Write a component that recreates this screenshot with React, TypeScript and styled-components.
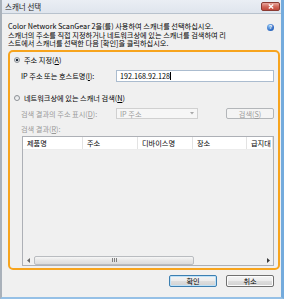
import React from "react";
import styled, { createGlobalStyle } from "styled-components";

const GlobalStyle = createGlobalStyle`
  html, body { margin: 0; padding: 0; background: #ffffff; }
  body {
    font-family: "Noto Sans CJK KR", "Noto Sans", sans-serif;
    font-size: 7.2px;
    color: #000;
  }
  * { box-sizing: border-box; }
`;

const Window = styled.div`
  width: 284px;
  height: 299px;
  display: flex;
  flex-direction: column;
  background: #f0f0f0;
  border-left: 2px solid #a9b1ba;
  border-right: 3px solid #74abdd;
  border-bottom: 2px solid #95c0e6;
`;

const TitleBar = styled.div`
  height: 14px;
  flex: none;
  display: flex;
  align-items: center;
  justify-content: space-between;
  padding-left: 3px;
  background: linear-gradient(#eaeef4, #dfe5ed);
  border-bottom: 1px solid #b8c2cd;
`;

const Title = styled.span`
  font-size: 7.5px;
  line-height: 13px;
  color: #1b1b1b;
`;

const CloseButton = styled.div`
  width: 19px;
  height: 9px;
  margin-right: 1px;
  margin-bottom: 1px;
  border: 1px solid #8b3b33;
  border-radius: 2px;
  background: linear-gradient(#e9a69d, #cf6457 55%, #c0493c);
  display: flex;
  align-items: center;
  justify-content: center;
`;

const Main = styled.div`
  flex: 1;
  display: flex;
  flex-direction: column;
  padding: 8px 0 0 6px;
`;

const Intro = styled.div`
  display: flex;
  justify-content: space-between;
  align-items: flex-start;
  padding-right: 7px;
`;

const IntroText = styled.div`
  line-height: 8.5px;
  white-space: nowrap;
`;

const HelpIcon = styled.div`
  width: 7px;
  height: 7px;
  margin-top: 2px;
  border-radius: 50%;
  background: radial-gradient(circle at 35% 30%, #8fc0f2, #2766c0 70%, #1a4f9c);
  color: #fff;
  font-size: 5px;
  font-weight: bold;
  line-height: 7px;
  text-align: center;
  font-family: "Liberation Sans", sans-serif;
`;

const GroupBox = styled.div`
  margin-top: 2.5px;
  margin-right: 1px;
  border: 2px solid #f7a41d;
  border-radius: 5px;
  padding: 2px 4px 2px 4px;
  display: flex;
  flex-direction: column;
`;

const RadioRow = styled.div<{ $top?: number }>`
  height: 12px;
  margin-top: ${(p) => p.$top ?? 0}px;
  display: flex;
  align-items: center;
  gap: 4px;
  white-space: nowrap;
`;

const RadioCircle = styled.div<{ $checked?: boolean }>`
  width: 6px;
  height: 6px;
  border-radius: 50%;
  border: 1px solid #8d9196;
  background: ${(p) =>
    p.$checked
      ? "radial-gradient(circle, #1d2a38 0 1.3px, #dfe3e8 1.6px)"
      : "linear-gradient(#e2e4e6, #f8f8f8)"};
`;

const FieldRow = styled.div<{ $top: number; $h: number }>`
  height: ${(p) => p.$h}px;
  margin-top: ${(p) => p.$top}px;
  padding-left: 7px;
  display: flex;
  align-items: center;
  white-space: nowrap;
`;

const FieldLabel = styled.span<{ $disabled?: boolean }>`
  width: 95px;
  flex: none;
  color: ${(p) => (p.$disabled ? "#9a9a9a" : "#000")};
`;

const TextBox = styled.div`
  width: 158px;
  height: 12px;
  border: 1px solid #abbccf;
  background: #fff;
  padding-left: 3px;
  display: flex;
  align-items: center;
`;

const Caret = styled.span`
  display: inline-block;
  width: 1px;
  height: 8px;
  background: #000;
  margin-left: 0.5px;
`;

const SelectBox = styled.div`
  width: 82px;
  height: 11px;
  border: 1px solid #d0d0d0;
  background: #f6f6f6;
  color: #9a9a9a;
  padding: 0 3px;
  display: flex;
  align-items: center;
  justify-content: space-between;
`;

const SmallButton = styled.div`
  width: 48px;
  height: 11px;
  margin-left: auto;
  border: 1px solid #b3b6b9;
  border-radius: 2px;
  background: #f4f4f4;
  color: #9a9a9a;
  display: flex;
  align-items: center;
  justify-content: center;
`;

const SubLabel = styled.div`
  height: 10px;
  margin-top: 5px;
  padding-left: 7px;
  color: #9a9a9a;
  display: flex;
  align-items: center;
`;

const ListBox = styled.div`
  height: 130px;
  margin-top: 2px;
  margin-left: 8px;
  border: 1px solid #adb0b6;
  display: flex;
  flex-direction: column;
  overflow: hidden;
`;

const HeaderRow = styled.div`
  height: 13px;
  flex: none;
  display: flex;
  background: #fff;
  border-bottom: 1px solid #ececec;
`;

const HeaderCell = styled.div<{ $w?: number }>`
  width: ${(p) => (p.$w ? `${p.$w}px` : "auto")};
  flex: ${(p) => (p.$w ? "none" : "1")};
  padding-left: 4px;
  display: flex;
  align-items: center;
  border-right: 1px solid #e3e3e3;
  white-space: nowrap;
  overflow: hidden;
`;

const ListBody = styled.div`
  flex: 1;
  background: #f0f0f0;
`;

const HScroll = styled.div`
  height: 10px;
  flex: none;
  display: flex;
  align-items: center;
  background: #f0f0f0;
`;

const ArrowCell = styled.div<{ $right?: boolean }>`
  width: 10px;
  height: 10px;
  display: flex;
  align-items: center;
  justify-content: center;
  margin-left: ${(p) => (p.$right ? "auto" : "0")};
`;

const Thumb = styled.div`
  width: 160px;
  height: 9px;
  margin-left: 1px;
  border: 1px solid #b9bcc0;
  border-radius: 2px;
  background: linear-gradient(#f6f6f6, #e6e6e6 50%, #dcdcdc);
  display: flex;
  align-items: center;
  justify-content: center;
`;

const ButtonRow = styled.div`
  margin-top: 5px;
  display: flex;
  justify-content: flex-end;
  gap: 9px;
  padding-right: 7px;
`;

const DialogButton = styled.div<{ $default?: boolean }>`
  width: 48px;
  height: 12px;
  border: 1px solid ${(p) => (p.$default ? "#3c7fb1" : "#707070")};
  border-radius: 2px;
  background: linear-gradient(#f4f4f4, #ececec 50%, #dedede 51%, #d2d2d2);
  box-shadow: ${(p) => (p.$default ? "inset 0 0 0 1px #bfe2f8" : "inset 0 0 0 1px #fcfcfc")};
  display: flex;
  align-items: center;
  justify-content: center;
`;

const Mn = styled.span`
  text-decoration: underline;
  text-underline-offset: 0.5px;
`;

const Grip = () => (
  <svg width="5" height="4" viewBox="0 0 5 4">
    <path d="M0.5 0v4M2.5 0v4M4.5 0v4" stroke="#7f7f7f" strokeWidth="1" />
  </svg>
);

export default function App() {
  return (
    <>
      <GlobalStyle />
      <Window>
        <TitleBar>
          <Title>스캐너 선택</Title>
          <CloseButton>
            <svg width="6" height="5" viewBox="0 0 6 5">
              <path d="M0.8 0.5L5.2 4.5M5.2 0.5L0.8 4.5" stroke="#ffffff" strokeWidth="1.3" />
            </svg>
          </CloseButton>
        </TitleBar>
        <Main>
          <Intro>
            <IntroText>
              Color Network ScanGear 2을(를) 사용하여 스캐너를 선택하십시오.
              <br />
              스캐너의 주소를 직접 지정하거나 네트워크상에 있는 스캐너를 검색하여 리
              <br />
              스트에서 스캐너를 선택한 다음 [확인]을 클릭하십시오.
            </IntroText>
            <HelpIcon>?</HelpIcon>
          </Intro>
          <GroupBox>
            <RadioRow>
              <RadioCircle $checked />
              <span>
                주소 지정(<Mn>A</Mn>)
              </span>
            </RadioRow>
            <FieldRow $top={4} $h={12}>
              <FieldLabel>
                IP 주소 또는 호스트명(<Mn>I</Mn>):
              </FieldLabel>
              <TextBox>
                192.168.92.128
                <Caret />
              </TextBox>
            </FieldRow>
            <RadioRow $top={10}>
              <RadioCircle />
              <span>
                네트워크상에 있는 스캐너 검색(<Mn>N</Mn>)
              </span>
            </RadioRow>
            <FieldRow $top={4} $h={11}>
              <FieldLabel $disabled>
                검색 결과의 주소 표시(<Mn>D</Mn>):
              </FieldLabel>
              <SelectBox>
                <span>IP 주소</span>
                <svg width="4" height="3" viewBox="0 0 4 3">
                  <path d="M0 0h4L2 2.5z" fill="#a8a8a8" />
                </svg>
              </SelectBox>
              <SmallButton>
                검색(<Mn>S</Mn>)
              </SmallButton>
            </FieldRow>
            <SubLabel>
              검색 결과(<Mn>R</Mn>):
            </SubLabel>
            <ListBox>
              <HeaderRow>
                <HeaderCell $w={60}>제품명</HeaderCell>
                <HeaderCell $w={55}>주소</HeaderCell>
                <HeaderCell $w={55}>디바이스명</HeaderCell>
                <HeaderCell $w={54}>장소</HeaderCell>
                <HeaderCell>급지대</HeaderCell>
              </HeaderRow>
              <ListBody />
              <HScroll>
                <ArrowCell>
                  <svg width="3" height="5" viewBox="0 0 3 5">
                    <path d="M3 0v5L0 2.5z" fill="#6a6a6a" />
                  </svg>
                </ArrowCell>
                <Thumb>
                  <Grip />
                </Thumb>
                <ArrowCell $right>
                  <svg width="3" height="5" viewBox="0 0 3 5">
                    <path d="M0 0v5L3 2.5z" fill="#3a3a3a" />
                  </svg>
                </ArrowCell>
              </HScroll>
            </ListBox>
          </GroupBox>
          <ButtonRow>
            <DialogButton $default>확인</DialogButton>
            <DialogButton>취소</DialogButton>
          </ButtonRow>
        </Main>
      </Window>
    </>
  );
}
